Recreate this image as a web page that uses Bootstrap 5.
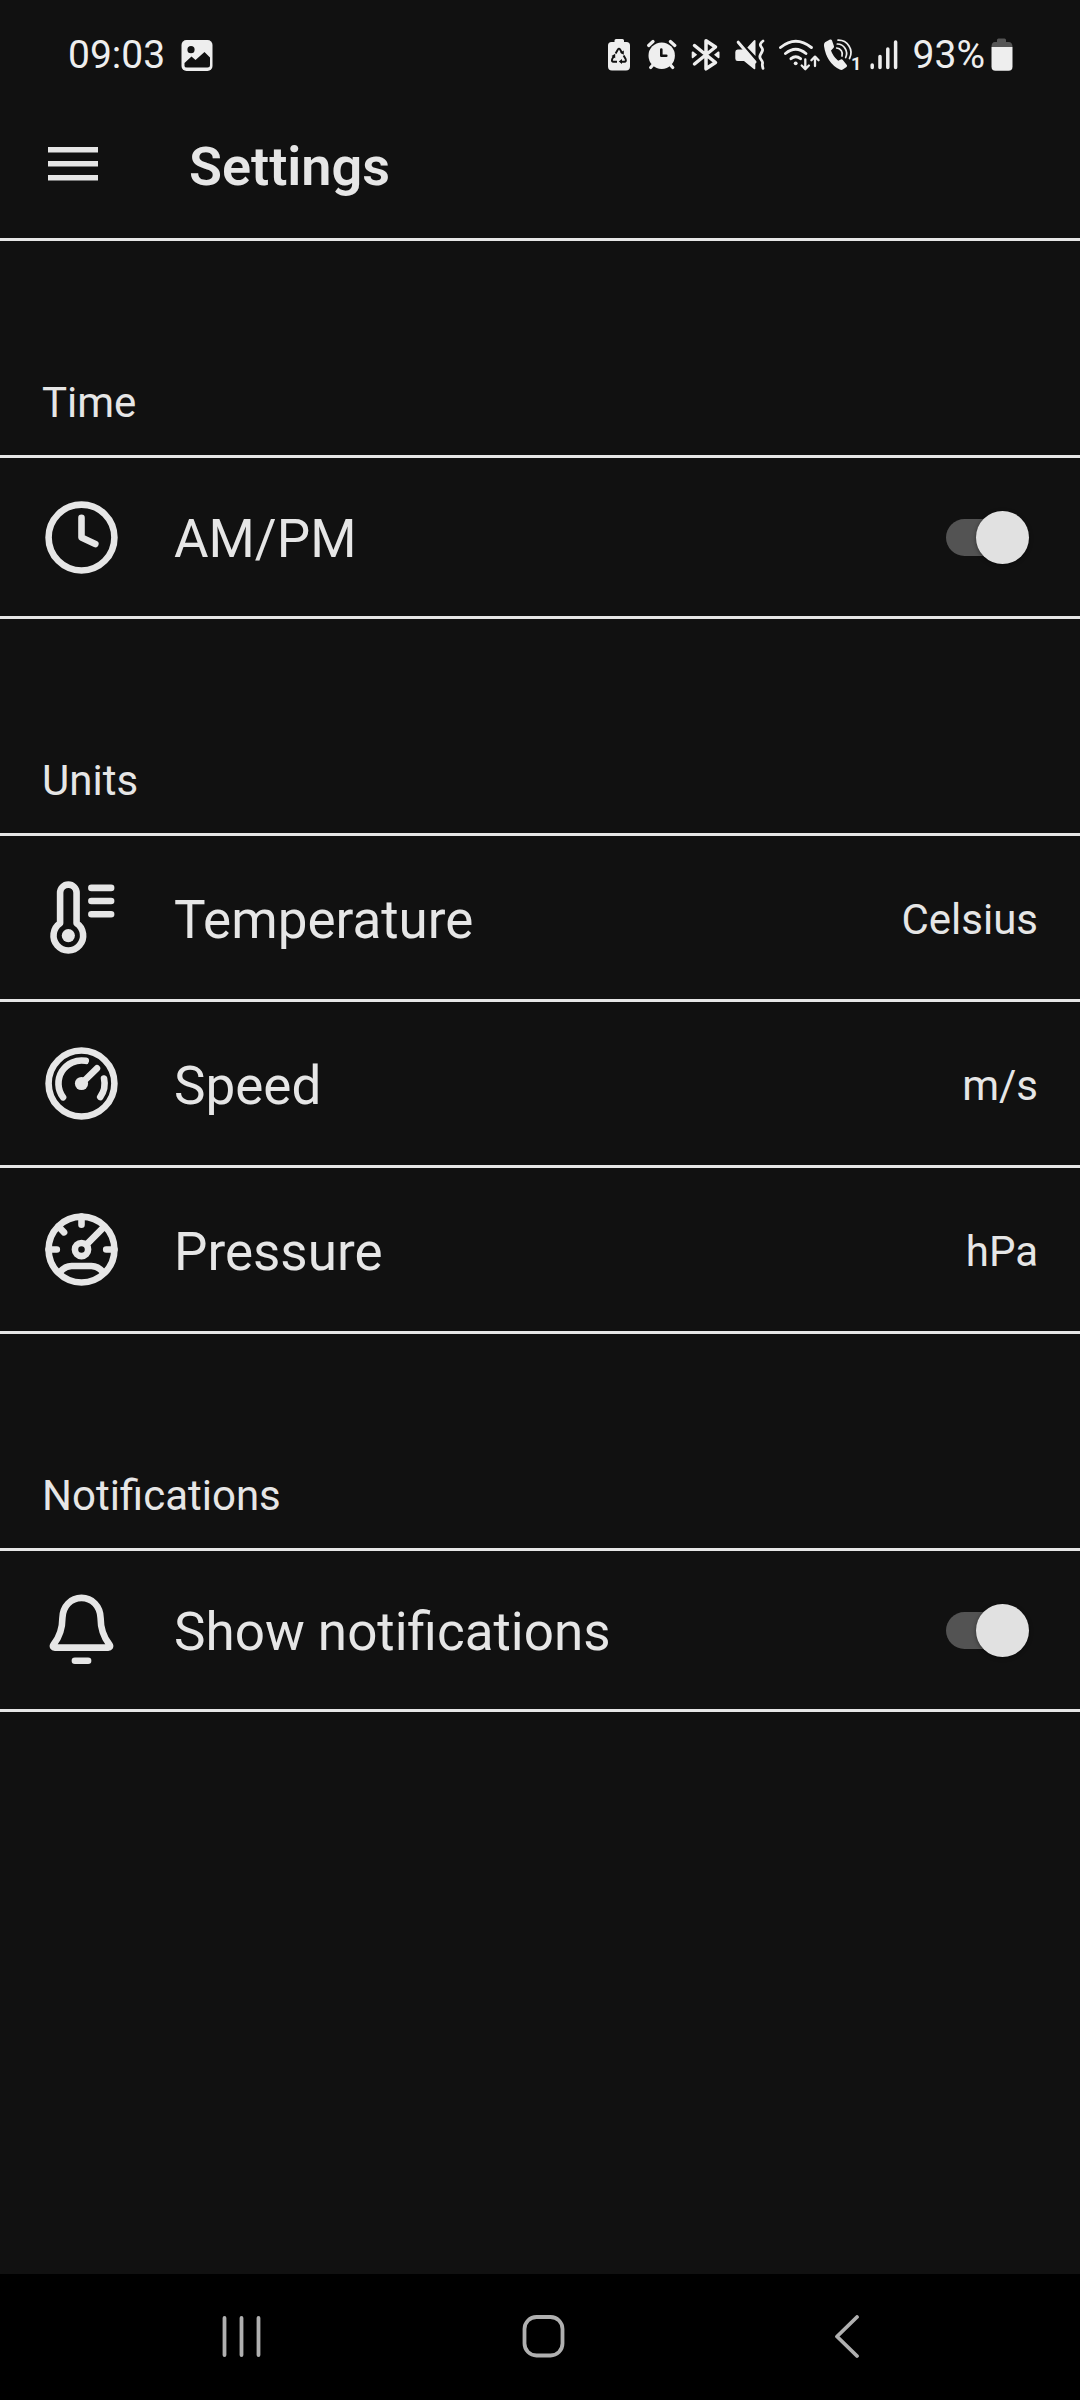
<!DOCTYPE html>
<html lang="en">
<head>
<meta charset="utf-8">
<meta name="viewport" content="width=device-width, initial-scale=1">
<title>Settings</title>
<link href="https://cdn.jsdelivr.net/npm/bootstrap@5.3.0/dist/css/bootstrap.min.css" rel="stylesheet">
<style>
  :root { --ink: #e6e6e6; --ground: #111; }
  body { background: var(--ground); color: var(--ink); font-family: Roboto, "Noto Sans", sans-serif; }
  svg { display: block; flex: none; }
  .line-art { fill: none; stroke: currentColor; stroke-width: 2; stroke-linecap: round; stroke-linejoin: round; }

  .status-bar { min-height: 90px; padding: 19px 67px 0 68px; font-size: 39px; line-height: 48px; color: #eee; }
  .status-bar .photo { margin-left: 16px; }
  .status-bar .charge { margin-right: 6px; }
  .sim-number { font-size: 18px; font-weight: 700; }

  .app-bar { min-height: 151px; padding: 0 48px; border-bottom: 3px solid var(--ink); }
  .app-bar h1 { font-size: 54px; line-height: 64px; font-weight: 600; margin-left: 91px; padding-top: 5px; }
  .plain-btn { color: inherit; background: none; border: 0; padding: 0; }

  .group-title { font-size: 42px; line-height: 50px; font-weight: 400; padding: 137px 42px 27px; border-bottom: 3px solid var(--ink); }
  .setting { min-height: 166px; padding: 0 42px; border: 0; border-bottom: 3px solid var(--ink); background: none; color: inherit; text-align: left; }
  .setting.toggle { min-height: 161px; padding-right: 51px; }
  .setting-name { font-size: 53px; line-height: 64px; margin-left: 53px; }
  .setting-value { font-size: 42px; line-height: 50px; }

  .form-check-input.knob-switch { position: relative; flex: none; width: 83px; height: 53px; margin: 0; border: 0; border-radius: 27px; background: none; }
  .knob-switch::before { content: ""; position: absolute; inset: 8px 6px 8px 0; border-radius: 19px; background: #535353; }
  .knob-switch::after { content: ""; position: absolute; top: 0; right: 0; width: 53px; height: 53px; border-radius: 50%; background: #e1e1e1; box-shadow: 0 1px 4px rgba(0,0,0,.4); }
  .knob-switch:not(:checked)::after { right: 30px; }

  .nav-keys { background: #000; color: #b0b0b0; min-height: 126px; padding: 0 82px 0 91px; }
</style>
<script src="https://cdn.jsdelivr.net/npm/bootstrap@5.3.0/dist/js/bootstrap.bundle.min.js"></script>
</head>
<body>
<div class="min-vh-100 d-flex flex-column">

  <div class="status-bar d-flex align-items-center justify-content-between">
    <div class="d-flex align-items-center">
      <span>09:03</span>
      <svg class="photo" width="32" height="36" viewBox="0 0 32 36" aria-hidden="true">
        <rect x="0.5" y="3" width="31" height="31" rx="5" fill="currentColor"/>
        <circle cx="10" cy="12.700" r="3.600" fill="#111"/>
        <path d="M3.500 29v-3l7-6.500 4 3.500 9-8 5.500 5.500V28q0 2.500-2.500 2.500H6q-2.500 0-2.500-1.500z" fill="#111"/>
      </svg>
    </div>
    <div class="d-flex align-items-center">
      <svg width="44" height="36" viewBox="0 0 44 36" aria-hidden="true">
        <path d="M11.500 5V3.500Q11.500 2 13 2h6.500Q21 2 21 3.500V5h2.500Q27 5 27 8.500v21q0 4-4 4H9q-4 0-4-4v-21Q5 5 8.500 5z" fill="currentColor"/>
        <g fill="none" stroke="#111" stroke-width="1.900" stroke-linejoin="round"><path d="M12.600 16.500l2.300-4q1.100-1.700 2.200 0l2 3.400"/><path d="M11.200 18.500l-2 3.500q-1 2.700 1.300 2.700h3.500"/><path d="M20.600 18.500l2 3.500q1 2.700-1.300 2.700h-3.500"/></g>
        <path d="M20.800 13.500v4.300l-3.700-2zM8.500 19l3.700-2.200v4.400zM19 22v5l-3.200-2.500z" fill="#111"/>
      </svg>
      <svg width="44" height="36" viewBox="0 0 44 36" aria-hidden="true">
        <circle cx="14.700" cy="18.700" r="13.200" fill="currentColor"/>
        <g fill="none" stroke="currentColor" stroke-width="3.200" stroke-linecap="round"><path d="M1.700 8.500l4.300-4M23.400 4.500l4.400 4M3.700 30.500l3-3.500M25.700 30.500l-3-3.500"/></g>
        <path d="M14.300 12.500v6.200h5" fill="none" stroke="#111" stroke-width="2.600" stroke-linecap="round" stroke-linejoin="round"/>
      </svg>
      <svg width="44" height="36" viewBox="0 0 44 36" aria-hidden="true">
        <path d="M3.500 8.500L24.500 25.500l-9.500 6.300V3.700L24.500 10 3.500 27" fill="none" stroke="currentColor" stroke-width="3.500" stroke-linecap="round" stroke-linejoin="round"/>
        <path d="M.700 15.500q0-1.500 1.500-1l4 3.300-4 3.200q-1.500.700-1.500-1zM28.500 15.500q0-1.500-1.500-1l-4 3.300 4 3.200q1.500.700 1.500-1z" fill="currentColor"/>
      </svg>
      <svg width="44" height="36" viewBox="0 0 44 36" aria-hidden="true">
        <path d="M2.700 12.500H9L20.300 25.500v6Q20.300 33 18.500 31.700L9 24H2.700Q.300 24 .300 21.500V15q0-2.500 2.400-2.500zM12.300 10.500l6.500-7q1.700-1 1.700.5v15z" fill="currentColor"/>
        <path d="M3.200 5.200L20 25" stroke="currentColor" stroke-width="3" stroke-linecap="round"/>
        <path d="M28 4q-4 3-2 5.500t1.500 4-2 4 .500 5 1.500 4 .500 4.800" fill="none" stroke="currentColor" stroke-width="2.800" stroke-linecap="round"/>
      </svg>
      <svg width="44" height="36" viewBox="0 0 44 36" aria-hidden="true">
        <g fill="none" stroke="currentColor" stroke-width="2.900" stroke-linecap="round"><path d="M1.500 10.500q15.200-12.500 30.900 0M6.500 16.500q10.200-8.500 20.400 0M12 21.700q4.700-4 9.500 0"/></g>
        <circle cx="16.700" cy="26.300" r="1.900" fill="currentColor"/>
        <path d="M26.300 22.500v9.500M22.700 28.500l3.600 3.700 3.600-3.700M36 29V20M32.400 23.300L36 19.600l3.600 3.700" fill="none" stroke="currentColor" stroke-width="2.300" stroke-linecap="round" stroke-linejoin="round"/>
      </svg>
      <svg width="46" height="36" viewBox="0 0 46 36" aria-hidden="true">
        <path d="M2 5.200L7 2.500q1.500-.500 2 1l2 5.700q.300 1.200-.800 2L8 13.500q2 6 7.200 10.200l2.600-1.300q1.200-.500 2 .500l4 5q.700 1-.300 2l-3.700 2.700q-1.500.800-3 0Q3.500 26 1 9q-.300-2.700 1-3.800z" fill="currentColor"/>
        <g fill="none" stroke="currentColor" stroke-width="1.700" stroke-linecap="round"><path d="M15 3.200A12.500 12.500 0 0 1 26.500 21.500M14.300 7A9.500 9.500 0 0 1 22.700 20.500M13.700 11A6 6 0 0 1 19 19"/></g>
        <text class="sim-number" x="28" y="33" fill="currentColor">1</text>
      </svg>
      <svg width="44" height="36" viewBox="0 0 44 36" aria-hidden="true">
        <g fill="none" stroke="currentColor" stroke-width="3.500" stroke-linecap="round"><path d="M3.200 28v2.500M11 19.500v11M18.800 12v18.500M26.600 5v25.500"/></g>
      </svg>
      <span class="charge">93%</span>
      <svg width="22" height="36" viewBox="0 0 22 36" aria-hidden="true">
        <path d="M6 5V3q0-1.500 1.500-1.500h6Q15 1.500 15 3v2h2.500Q21.500 5 21.500 10H.500Q.500 5 4 5z" fill="#555"/>
        <path d="M.500 10h21v19.700q0 4-4 4h-13q-4 0-4-4z" fill="currentColor"/>
      </svg>
    </div>
  </div>

  <header class="app-bar d-flex align-items-center">
    <button type="button" class="plain-btn" aria-label="Open menu">
      <svg width="50" height="34" viewBox="0 0 50 34" fill="currentColor"><path d="M0 0h50v5.500H0zM0 14h50v5.500H0zM0 28h50v5.500H0z"/></svg>
    </button>
    <h1 class="mb-0">Settings</h1>
  </header>

  <main class="flex-grow-1">
    <section>
      <h2 class="group-title mb-0">Time</h2>
      <div class="setting toggle d-flex align-items-center">
        <svg class="line-art" width="79" height="79" viewBox="0 0 24 24" aria-hidden="true"><circle cx="12" cy="12" r="10"/><path d="M12 6v6l4.200 2"/></svg>
        <label class="setting-name flex-grow-1 pt-1" for="ampm">AM/PM</label>
        <input class="form-check-input knob-switch" type="checkbox" role="switch" id="ampm" checked>
      </div>
    </section>

    <section>
      <h2 class="group-title mb-0">Units</h2>
      <button type="button" class="setting w-100 d-flex align-items-center">
        <svg class="line-art" width="79" height="79" viewBox="0 0 24 24" aria-hidden="true"><path d="M5.500 13.760V4.500a2.500 2.500 0 0 1 5 0v9.260a4.500 4.500 0 1 1-5 0zM15 3h6M15 7h6M15 11h6"/><circle cx="8" cy="17.500" r="2" fill="currentColor" stroke="none"/></svg>
        <span class="setting-name flex-grow-1 pt-1">Temperature</span>
        <span class="setting-value pt-1">Celsius</span>
      </button>
      <button type="button" class="setting w-100 d-flex align-items-center">
        <svg class="line-art" width="79" height="79" viewBox="0 0 24 24" aria-hidden="true"><circle cx="12" cy="12" r="10"/><path d="M6.400 16.200A7 7 0 0 1 13.300 5.120M18.850 10.500A7 7 0 0 1 17.700 16.100M12 12l4.700-4.600"/><circle cx="12" cy="12" r="2" fill="currentColor" stroke="none"/></svg>
        <span class="setting-name flex-grow-1 pt-1">Speed</span>
        <span class="setting-value pt-1">m/s</span>
      </button>
      <button type="button" class="setting w-100 d-flex align-items-center">
        <svg class="line-art" width="79" height="79" viewBox="0 0 24 24" aria-hidden="true"><circle cx="12" cy="12" r="10"/><circle cx="12" cy="12" r="2"/><path d="M13.500 10.500l5.200-5.200M12 2v2.500M2 12h2.500M22 12h-2.500M5 5l1.700 1.800M5.400 18.900Q7 17 9 17h6q2 0 3.600 1.900"/></svg>
        <span class="setting-name flex-grow-1 pt-1">Pressure</span>
        <span class="setting-value pt-1">hPa</span>
      </button>
    </section>

    <section>
      <h2 class="group-title mb-0">Notifications</h2>
      <div class="setting toggle d-flex align-items-center">
        <svg class="line-art" width="79" height="79" viewBox="0 0 24 24" aria-hidden="true"><path d="M12 2.100c-3.200 0-5.700 2.500-5.800 6.100 0 3.500-.8 5.700-2.700 8.100-.4.600-.1.900.4.900h16.200c.5 0 .8-.3.400-.9-1.900-2.400-2.700-4.600-2.700-8.100-.1-3.600-2.600-6.100-5.800-6.100zM10 21.200h4"/></svg>
        <label class="setting-name flex-grow-1 pt-1" for="notify">Show notifications</label>
        <input class="form-check-input knob-switch" type="checkbox" role="switch" id="notify" checked>
      </div>
    </section>
  </main>

  <nav class="nav-keys row g-0 align-items-center" aria-label="System navigation">
    <button type="button" class="plain-btn col d-flex justify-content-center" aria-label="Recent apps">
      <svg width="44" height="44" viewBox="0 0 44 44" fill="none" stroke="currentColor" stroke-width="3.800" stroke-linecap="round"><path d="M4.500 3v37M21.500 3v37M38.500 3v37"/></svg>
    </button>
    <button type="button" class="plain-btn col d-flex justify-content-center" aria-label="Home">
      <svg width="44" height="44" viewBox="0 0 44 44" fill="none" stroke="currentColor" stroke-width="3.800"><rect x="2.500" y="2" width="38" height="38.500" rx="12"/></svg>
    </button>
    <button type="button" class="plain-btn col d-flex justify-content-center" aria-label="Back">
      <svg width="44" height="44" viewBox="0 0 44 44" fill="none" stroke="currentColor" stroke-width="3.800" stroke-linecap="round" stroke-linejoin="round"><path d="M32 2L12 21.500l20 19.500"/></svg>
    </button>
  </nav>
</div>
</body>
</html>
